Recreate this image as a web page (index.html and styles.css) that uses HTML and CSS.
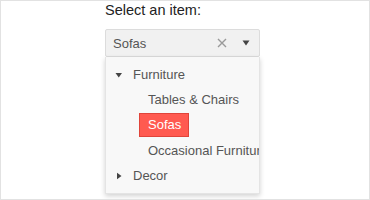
FILE: index.html
```html
<!DOCTYPE html>
<html lang="en">
<head>
    <meta charset="UTF-8">
    <meta name="viewport" content="width=device-width, initial-scale=1.0">
    <title>Select an item</title>
    <link rel="stylesheet" href="styles.css">
</head>
<body>
    <div class="frame">
        <p class="label">Select an item:</p>

        <div class="combo">
            <div class="combo-input">
                <span class="combo-value">Sofas</span>
                <svg class="clear-icon" width="10" height="10" viewBox="0 0 10 10">
                    <path d="M1 1 L9 9 M9 1 L1 9" stroke="#9a9a9a" stroke-width="1.4" fill="none"/>
                </svg>
                <svg class="caret-icon" width="8" height="6" viewBox="0 0 8 6">
                    <path d="M0.5 0.5 L7.5 0.5 L4 5.5 Z" fill="#444"/>
                </svg>
            </div>

            <div class="dropdown">
                <ul class="tree">
                    <li class="node">
                        <div class="row level-0">
                            <svg class="toggle" width="8" height="8" viewBox="0 0 8 8">
                                <path d="M0.5 2 L7 2 L3.75 6.5 Z" fill="#444"/>
                            </svg>
                            <span class="text">Furniture</span>
                        </div>
                        <ul class="tree">
                            <li class="row level-1"><span class="text">Tables &amp; Chairs</span></li>
                            <li class="row level-1"><span class="text selected">Sofas</span></li>
                            <li class="row level-1"><span class="text">Occasional Furniture</span></li>
                        </ul>
                    </li>
                    <li class="node">
                        <div class="row level-0">
                            <svg class="toggle" width="8" height="8" viewBox="0 0 8 8">
                                <path d="M2 0.75 L6.5 4 L2 7.25 Z" fill="#444"/>
                            </svg>
                            <span class="text">Decor</span>
                        </div>
                    </li>
                </ul>
            </div>
        </div>
    </div>
</body>
</html>
```

FILE: styles.css
```css
body {
    margin: 0;
    font-family: "Liberation Sans", Arial, sans-serif;
    background-color: #fff;
}
.frame {
    width: 370px;
    height: 200px;
    box-sizing: border-box;
    border: 1px solid #e2e2e2;
    padding-left: 104px;
    overflow: hidden;
}
.label {
    margin: 1px 0 0 0;
    font-size: 14.5px;
    line-height: 17px;
    color: #222;
}
.combo {
    width: 155px;
    margin-top: 10px;
}
.combo-input {
    display: flex;
    align-items: center;
    height: 28px;
    box-sizing: border-box;
    padding: 0 9px 0 7px;
    background-color: #f1f1f1;
    border: 1px solid #dcdcdc;
    border-radius: 2px;
}
.combo-value {
    flex: 1;
    font-size: 13px;
    color: #555;
}
.clear-icon {
    margin-right: 15px;
}
.dropdown {
    height: 137px;
    box-sizing: border-box;
    padding-top: 5px;
    background-color: #f8f8f8;
    border: 1px solid #e4e4e4;
    border-top: none;
    box-shadow: 0px 2px 5px rgba(0, 0, 0, 0.18);
    overflow: hidden;
}
.tree {
    list-style: none;
    margin: 0;
    padding: 0;
}
.row {
    display: flex;
    align-items: center;
    height: 25.3px;
    font-size: 13px;
    color: #555;
    white-space: nowrap;
}
.level-0 {
    padding-left: 9px;
}
.level-1 {
    padding-left: 33px;
}
.toggle {
    margin-right: 9px;
}
.text {
    display: inline-block;
    padding: 0 7px 0 8px;
    line-height: 22px;
    border: 1px solid transparent;
}
.level-0 .text {
    padding-left: 0;
}
.selected {
    background-color: #ff5a50;
    border-color: #e0443a;
    color: #fff;
}
```
